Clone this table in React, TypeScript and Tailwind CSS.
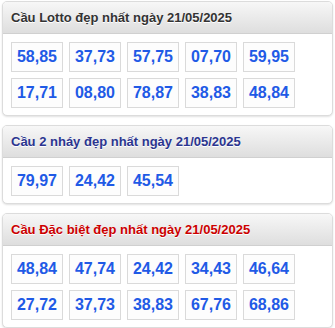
import React from "react";

const cards = [
  {
    title: "Cầu Lotto đẹp nhất ngày 21/05/2025",
    color: "text-[#333333]",
    nums: ["58,85", "37,73", "57,75", "07,70", "59,95", "17,71", "08,80", "78,87", "38,83", "48,84"],
  },
  {
    title: "Cầu 2 nháy đẹp nhất ngày 21/05/2025",
    color: "text-[#2b3590]",
    nums: ["79,97", "24,42", "45,54"],
  },
  {
    title: "Cầu Đặc biệt đẹp nhất ngày 21/05/2025",
    color: "text-[#cc0000]",
    nums: ["48,84", "47,74", "24,42", "34,43", "46,64", "27,72", "37,73", "38,83", "67,76", "68,86"],
  },
];

export default function App() {
  return (
    <div className="w-[335px] h-[328px] bg-white pt-px px-[2px] flex flex-col gap-[9px]" style={{ fontFamily: '"Liberation Sans", Arial, sans-serif' }}>
      {cards.map((c) => (
        <div key={c.title} className="w-[331px] border border-[#dcdcdc] rounded-[5px] overflow-hidden shadow-[0_1px_2px_rgba(0,0,0,0.12)] bg-white">
          <div className={`h-[32px] flex items-center pl-[8px] border-b border-[#d0d0d0] bg-gradient-to-b from-[#f7f7f7] to-[#dedede] text-[13px] font-bold ${c.color} [text-shadow:0_1px_0_#fff]`}>
            {c.title}
          </div>
          <div className="pt-[8px] pb-[7px] px-[8px] grid grid-cols-[repeat(5,52px)] gap-[6px]">
            {c.nums.map((n, i) => (
              <div key={i} className="h-[30px] border border-[#dadada] bg-[#fdfdfd] flex items-center justify-center text-[16px] font-bold text-[#1f5ae6]">
                {n}
              </div>
            ))}
          </div>
        </div>
      ))}
    </div>
  );
}
